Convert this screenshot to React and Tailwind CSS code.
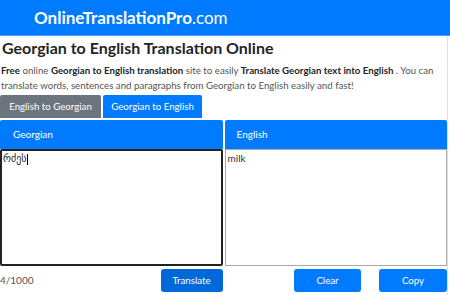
export default function App() {
  const font = { fontFamily: 'Lato, "DejaVu Sans", sans-serif' };

  return (
    <div className="w-[450px] h-[295px] overflow-hidden bg-white text-[#212529]" style={font}>
      {/* top bar */}
      <div className="h-[36px] bg-[#007bff] border-b border-[#4da3ff] flex items-center pl-[34px]">
        <span className="text-white text-[17px] leading-none">
          <b className="font-bold">OnlineTranslationPro</b>.com
        </span>
      </div>

      <div className="border-r border-[#dee2e6] mr-[2px] pt-[2px]">
        <h1 className="text-[16px] font-bold leading-[20px] pl-[2px]">
          Georgian to English Translation Online
        </h1>
        <p className="text-[9.7px] leading-[15px] text-[#555] mt-[5px] pl-[1px] whitespace-nowrap">
          <b className="text-[#212529]">Free</b> online <b className="text-[#212529]">Georgian to English translation</b> site to easily{" "}
          <b className="text-[#212529]">Translate Georgian text into English</b> . You can
          <br />
          translate words, sentences and paragraphs from Georgian to English easily and fast!
        </p>

        {/* direction tabs */}
        <div className="flex gap-[2px] mt-[2px]">
          <button className="w-[101px] h-[23px] bg-[#6c757d] text-white text-[9.7px] whitespace-nowrap rounded-t-[2px]">
            English to Georgian
          </button>
          <button className="w-[99px] h-[23px] bg-[#007bff] text-white text-[9.7px] whitespace-nowrap rounded-t-[2px]">
            Georgian to English
          </button>
        </div>

        {/* panels */}
        <div className="flex gap-[2px] mt-[2px]">
          <div className="w-[223px] flex flex-col">
            <div className="h-[29px] bg-[#007bff] text-white text-[10px] flex items-center pl-[13px] rounded-t-[2px]">
              Georgian
            </div>
            <div className="h-[117px] border-2 border-[#222] rounded-[2px] px-[1px] text-[10px] leading-[15px]">
              რძეს<span className="inline-block w-px h-[11px] bg-black align-middle" />
            </div>
            <div className="flex items-center justify-between h-[26px] mt-[1px]">
              <span className="text-[10px] text-[#555]">4/1000</span>
              <button className="w-[62px] h-[23px] bg-[#0069d9] text-white text-[9.7px] rounded-[3px]">
                Translate
              </button>
            </div>
          </div>

          <div className="w-[223px] flex flex-col">
            <div className="h-[29px] bg-[#007bff] text-white text-[10px] flex items-center pl-[12px] rounded-t-[2px]">
              English
            </div>
            <div className="h-[117px] border border-[#aaa] px-[2px] pt-[1px] text-[10px] leading-[15px] text-[#333]">
              milk
            </div>
            <div className="flex items-center justify-end gap-[18px] h-[26px] mt-[1px]">
              <button className="w-[67px] h-[23px] bg-[#007bff] text-white text-[9.7px] rounded-[3px]">Clear</button>
              <button className="w-[68px] h-[23px] bg-[#007bff] text-white text-[9.7px] rounded-[3px]">Copy</button>
            </div>
          </div>
        </div>
        <div className="border-b border-[#dee2e6] mt-[2px]" />
      </div>
    </div>
  );
}
